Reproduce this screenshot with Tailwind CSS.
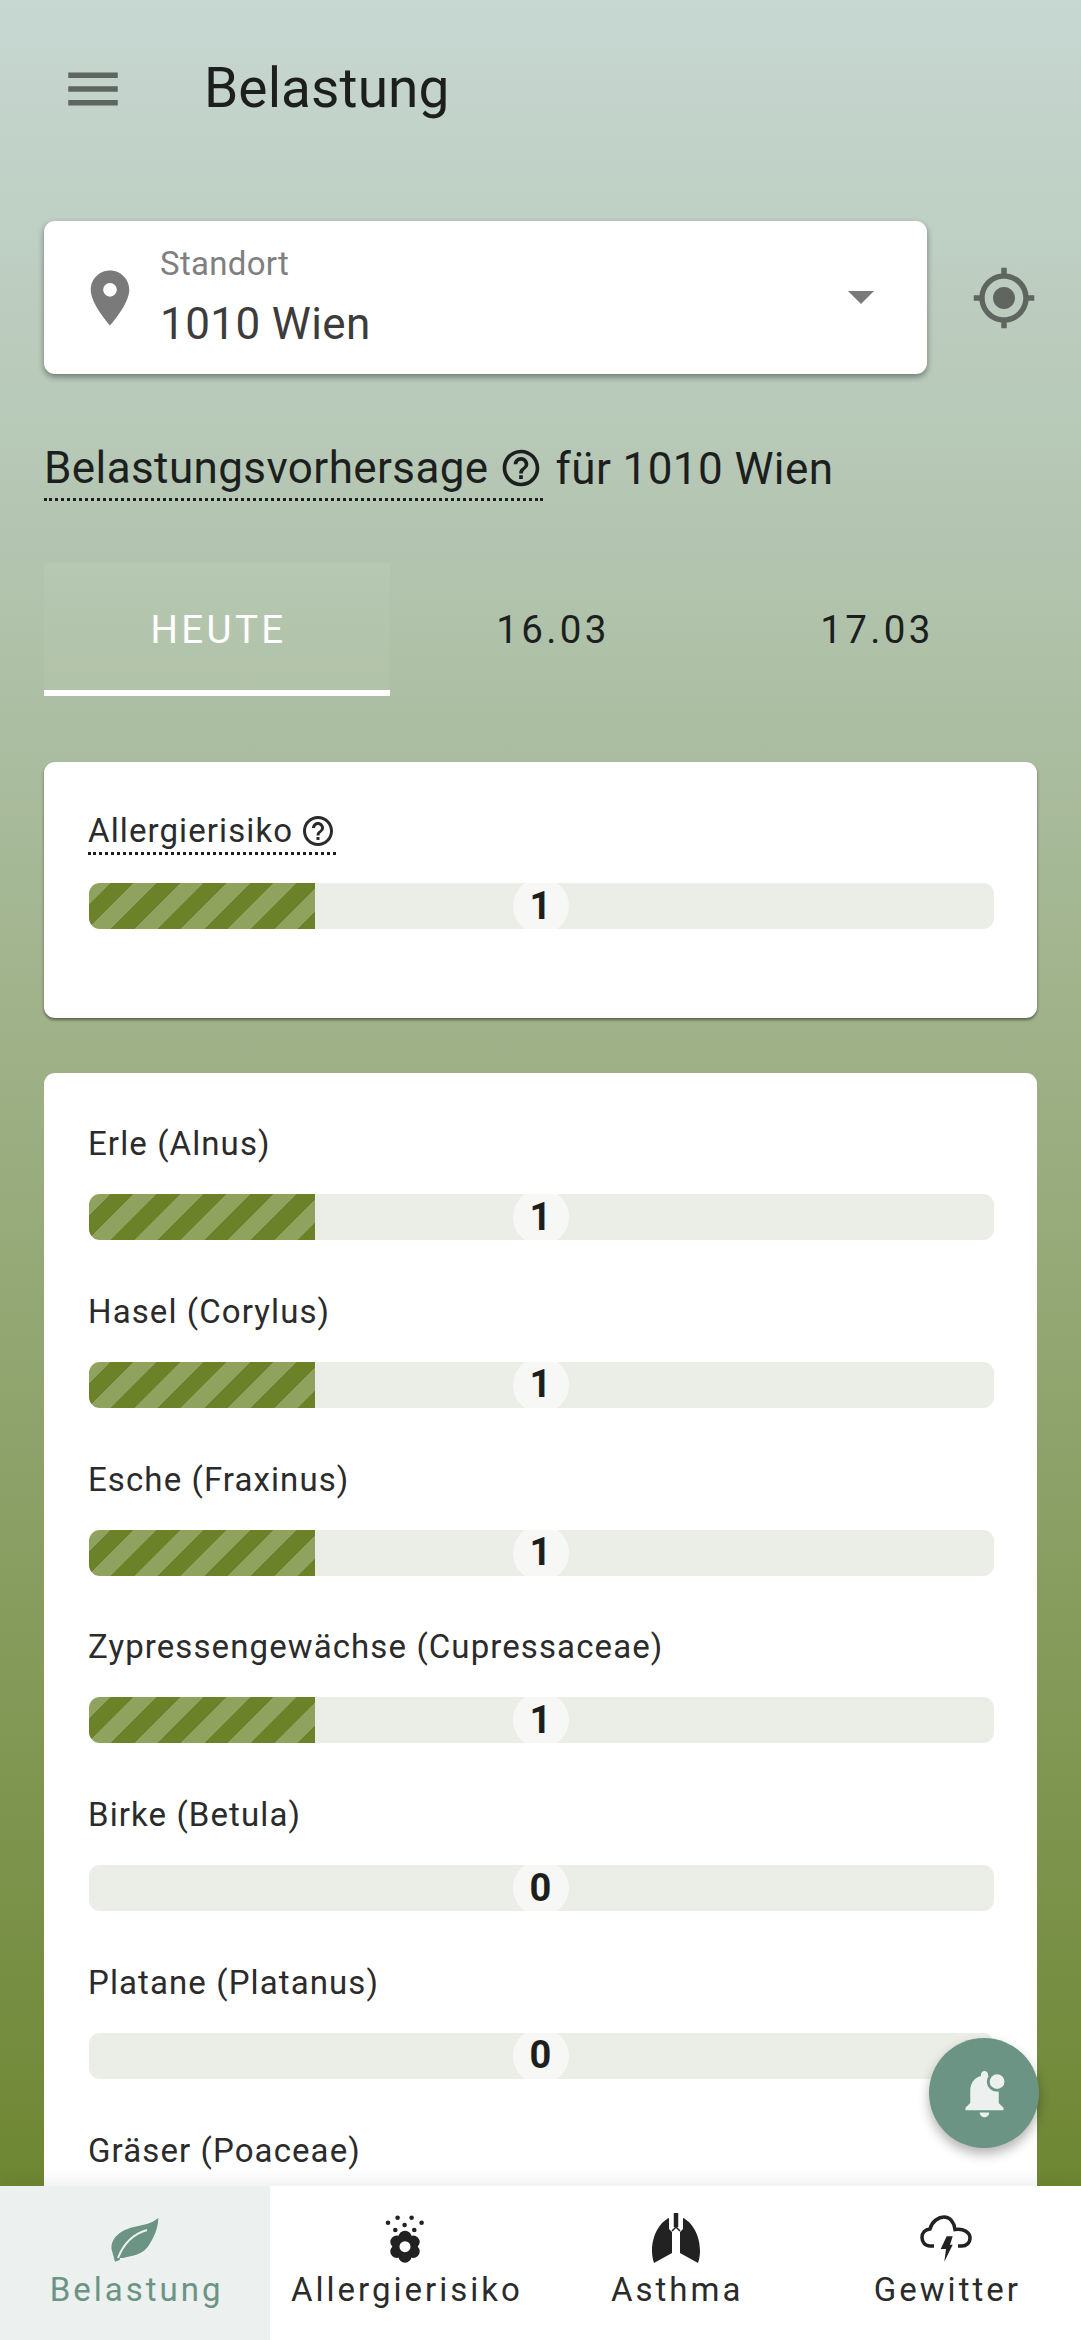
<!DOCTYPE html>
<html lang="de">
  <head>
    <meta charset="UTF-8" />
    <meta name="viewport" content="width=device-width, initial-scale=1" />
    <title>Belastung</title>
    <script src="https://cdn.jsdelivr.net/npm/@tailwindcss/browser@4"></script>
  </head>
  <body class="relative w-[1081px] h-[2340px] overflow-hidden flex flex-col font-[Roboto,sans-serif] text-[#1d1f1e]">
    <main class="h-[2186px] shrink-0 overflow-hidden bg-[linear-gradient(180deg,#c7d7d2_0%,#b3c5b0_25%,#9fb289_47%,#6e8733_100%)]">
      <!-- Header -->
      <header class="h-[177px] flex items-center pl-[60px]">
        <svg class="w-[66px] h-[66px] fill-[#5f6660]" viewBox="0 0 24 24"><path d="M3 18h18v-2H3v2zm0-5h18v-2H3v2zm0-7v2h18V6H3z" /></svg>
        <h1 class="ml-[78px] text-[55px] leading-none tracking-[0.1px]">Belastung</h1>
      </header>

      <!-- Standort -->
      <div class="mt-[44px] pl-[44px] flex items-center">
        <div class="w-[883px] h-[153px] rounded-[11px] bg-white shadow-[0_3px_6px_rgba(0,0,0,0.4)] flex items-center pl-[33px] pr-[53px]">
          <svg class="w-[66px] h-[66px] fill-[#7a7a7a] mt-[1px] shrink-0" viewBox="0 0 24 24"><path d="M12 2C8.13 2 5 5.13 5 9c0 5.25 7 13 7 13s7-7.75 7-13c0-3.87-3.13-7-7-7zm0 9.5a2.5 2.5 0 0 1 0-5 2.5 2.5 0 0 1 0 5z" /></svg>
          <div class="ml-[17px] flex-1">
            <div class="text-[33px] leading-[42px] text-[#7f7f7f] tracking-[0.3px]">Standort</div>
            <div class="text-[44px] leading-[58px] mt-[10px] text-[#3c3c3c] tracking-[0.4px]">1010 Wien</div>
          </div>
          <div class="w-0 h-0 border-x-[13px] border-x-transparent border-t-[13px] border-t-[#7a7a7a]"></div>
        </div>
        <svg class="ml-[44px] w-[66px] h-[66px] fill-[#5f6660]" viewBox="0 0 24 24"><path d="M12 8c-2.21 0-4 1.79-4 4s1.79 4 4 4 4-1.79 4-4-1.79-4-4-4zm8.94 3c-.46-4.17-3.77-7.48-7.94-7.94V1h-2v2.06C6.83 3.52 3.52 6.83 3.06 11H1v2h2.06c.46 4.17 3.77 7.48 7.94 7.94V23h2v-2.06c4.17-.46 7.48-3.77 7.94-7.94H23v-2h-2.06zM12 19c-3.87 0-7-3.13-7-7s3.13-7 7-7 7 3.13 7 7-3.13 7-7 7z" /></svg>
      </div>

      <!-- Vorhersage -->
      <div class="mt-[65px] pl-[44px] flex items-center text-[44px] h-[60px] leading-[60px] tracking-[0.4px]">
        <span class="flex items-center h-[60px] border-b-[3px] border-dotted border-[#1d1f1e] box-content">
          Belastungsvorhersage
          <svg class="ml-[10px] w-[44px] h-[44px] fill-[#1d1f1e]" viewBox="0 0 24 24"><path d="M11 18h2v-2h-2v2zm1-16C6.48 2 2 6.48 2 12s4.48 10 10 10 10-4.48 10-10S17.52 2 12 2zm0 18c-4.41 0-8-3.59-8-8s3.59-8 8-8 8 3.59 8 8-3.59 8-8 8zm0-14c-2.21 0-4 1.79-4 4h2c0-1.1.9-2 2-2s2 .9 2 2c0 2-3 1.75-3 5h2c0-2.25 3-2.5 3-5 0-2.21-1.79-4-4-4z" /></svg>
        </span>
        <span class="ml-[13px]">für 1010 Wien</span>
      </div>

      <!-- Tabs -->
      <div class="mt-[64px] ml-[44px] flex h-[133px] text-[38.5px] tracking-[3.4px]">
        <div class="w-[346px] flex items-center justify-center pl-[3px] pt-[7px] bg-white/5 border-b-[6px] border-white text-white">HEUTE</div>
        <div class="w-[324px] flex items-center justify-center pl-[2px] pt-[1px]">16.03</div>
        <div class="w-[324px] flex items-center justify-center pl-[2px] pt-[1px]">17.03</div>
      </div>

      <!-- Allergierisiko -->
      <section class="mt-[66px] mx-[44px] h-[256px] rounded-[11px] bg-white shadow-[0_2px_3px_rgba(0,0,0,0.45)] pt-[40px] px-[44px]">
        <div class="inline-flex items-center h-[42px] pt-[8px] border-b-[3px] border-dotted border-[#1d1f1e] box-content text-[33px] text-[#2b2b2b] tracking-[1.1px]">
          Allergierisiko
          <svg class="ml-[7px] w-[36px] h-[36px] fill-[#2b2b2b]" viewBox="0 0 24 24"><path d="M11 18h2v-2h-2v2zm1-16C6.48 2 2 6.48 2 12s4.48 10 10 10 10-4.48 10-10S17.52 2 12 2zm0 18c-4.41 0-8-3.59-8-8s3.59-8 8-8 8 3.59 8 8-3.59 8-8 8zm0-14c-2.21 0-4 1.79-4 4h2c0-1.1.9-2 2-2s2 .9 2 2c0 2-3 1.75-3 5h2c0-2.25 3-2.5 3-5 0-2.21-1.79-4-4-4z" /></svg>
        </div>
        <div class="relative mt-[28px] ml-[1px] -mr-[1px] h-[46px] rounded-[11px] bg-[#ebeee6] overflow-hidden">
          <div class="h-full w-[25%] bg-[repeating-linear-gradient(135deg,#8fa35f_0_15px,#6b8229_15px_31.5px,#8fa35f_31.5px_33px)]"></div>
          <div class="absolute left-1/2 -top-[5px] -ml-[29px] w-[56px] h-[56px] rounded-full bg-white/60 flex items-center justify-center text-[38px] font-bold">1</div>
        </div>
      </section>

      <!-- Pollen -->
      <section class="mt-[55px] mx-[44px] h-[1200px] rounded-[11px] bg-white pt-[41px] px-[44px]">
        <div id="pollenList" class="flex flex-col gap-[41.8px]"></div>
      </section>
    </main>

    <!-- Glocke -->
    <button class="absolute right-[42px] bottom-[192px] z-20 w-[110px] h-[110px] rounded-full bg-[#6b9485] shadow-[0_6px_12px_rgba(0,0,0,0.3)] flex items-center justify-center">
      <svg class="w-[57px] h-[57px]" viewBox="0 0 24 24"><path fill="#ecf0ef" d="M12 22c1.1 0 2-.9 2-2h-4c0 1.1.89 2 2 2zm6-6v-5c0-3.07-1.64-5.64-4.5-6.32V4c0-.83-.67-1.5-1.5-1.5s-1.5.67-1.5 1.5v.68C7.63 5.36 6 7.92 6 11v5l-2 2v1h16v-1l-2-2z" /><circle cx="17.3" cy="7" r="4.3" fill="#6b9485" /><circle cx="17.3" cy="7" r="3.1" fill="#ecf0ef" /></svg>
    </button>

    <!-- Bottom Navigation -->
    <nav class="relative z-10 flex-1 grid grid-cols-4 bg-white shadow-[0_-6px_14px_rgba(0,0,0,0.06)] text-[33px] tracking-[3px] text-[#2b2b2b]">
      <div class="flex flex-col items-center pt-[27px] bg-[#ecf0ef] text-[#6b9485]">
        <div class="h-[50px] flex items-end">
          <svg class="w-[48px] h-[46px]" viewBox="0 0 48 46"><path fill="#6b9485" d="M47.3 1C40 7 32 8 23 10 14 12 7 16 3 22 0 27 0 31 1.300 35L4 44.700 8.700 43 9 41C11 41 13 41 16 40 26 38 33 36 38 28 43 20 47 12 47.300 1Z" /><path fill="none" stroke="#ecf0ef" stroke-width="2" d="M7 41C12 28 22 17 36 13" /></svg>
        </div>
        <span class="mt-[2px] pl-[3px] leading-[50px]">Belastung</span>
      </div>
      <div class="flex flex-col items-center pt-[27px]">
        <div class="h-[50px] flex items-end">
          <svg class="w-[48px] h-[48px] fill-[#222]" viewBox="0 0 48 48">
            <circle cx="16.600" cy="2.700" r="2.300" /><circle cx="30.600" cy="2.700" r="2.300" />
            <circle cx="7" cy="7.700" r="2.300" /><circle cx="23.600" cy="10" r="2.300" /><circle cx="40.600" cy="7.700" r="2.300" />
            <circle cx="14.300" cy="15" r="2.300" /><circle cx="33.300" cy="15" r="2.300" />
            <circle cx="24" cy="22.200" r="6.500" /><circle cx="32.200" cy="27" r="6.500" /><circle cx="32.200" cy="36.400" r="6.500" />
            <circle cx="24" cy="41.200" r="6.500" /><circle cx="15.800" cy="36.400" r="6.500" /><circle cx="15.800" cy="27" r="6.500" />
            <circle cx="24" cy="31.700" r="8" />
            <circle cx="24" cy="31.700" r="5.500" fill="#fff" />
          </svg>
        </div>
        <span class="mt-[2px] pl-[3px] leading-[50px]">Allergierisiko</span>
      </div>
      <div class="flex flex-col items-center pt-[27px]">
        <div class="h-[50px] flex items-end">
          <svg class="w-[48px] h-[50px]" viewBox="0 0 48 50">
            <path fill="#222" d="M17 5C8 9 0 22 0 38 0 43 1 47 2 50L20 40V19L17 16ZM31 5C40 9 48 22 48 38 48 43 47 47 46 50L28 40V19L31 16Z" />
            <path fill="none" stroke="#222" stroke-width="4.500" d="M24 0V14" />
            <path fill="none" stroke="#222" stroke-width="1.500" d="M20 18L24 14 28 18" />
          </svg>
        </div>
        <span class="mt-[2px] pl-[3px] leading-[50px]">Asthma</span>
      </div>
      <div class="flex flex-col items-center pt-[27px]">
        <div class="h-[50px] flex items-end">
          <svg class="w-[52px] h-[48px]" viewBox="0 0 52 48">
            <path fill="none" stroke="#222" stroke-width="3.500" d="M14 31H10C5 31 2 27 2 22.500 2 18 5 14.500 10 14 12 6 19 2 24 2 30 2 34 7 35 14.500 44 13 50 18 50 23 50 28 46 31 42 31H38" />
            <path fill="#222" d="M26.700 21.300H32.700L30 29.700H32.700L24.300 46.700 26 34H20.700Z" />
          </svg>
        </div>
        <span class="mt-[2px] pl-[3px] leading-[50px]">Gewitter</span>
      </div>
    </nav>

    <script>
      const pollen = [
        ["Erle (Alnus)", 1],
        ["Hasel (Corylus)", 1],
        ["Esche (Fraxinus)", 1],
        ["Zypressengewächse (Cupressaceae)", 1],
        ["Birke (Betula)", 0],
        ["Platane (Platanus)", 0],
        ["Gräser (Poaceae)", null],
      ];

      // Gräser has no bar on screen, it sits below the navigation
      document.getElementById("pollenList").innerHTML = pollen
        .map(([name, level]) => {
          const fill = level
            ? `<div class="h-full w-[25%] bg-[repeating-linear-gradient(135deg,#8fa35f_0_15px,#6b8229_15px_31.5px,#8fa35f_31.5px_33px)]"></div>`
            : "";
          const bar =
            level === null
              ? ""
              : `<div class="relative mt-[20px] ml-[1px] -mr-[1px] h-[46px] rounded-[11px] bg-[#ebeee6] overflow-hidden">
                ${fill}
                <div class="absolute left-1/2 -top-[5px] -ml-[29px] w-[56px] h-[56px] rounded-full bg-white/60 flex items-center justify-center text-[38px] font-bold">${level}</div>
              </div>`;
          return `
            <div>
              <div class="h-[60px] leading-[60px] text-[33px] text-[#2b2b2b] tracking-[1.1px]">${name}</div>
              ${bar}
            </div>`;
        })
        .join("");
    </script>
  </body>
</html>
